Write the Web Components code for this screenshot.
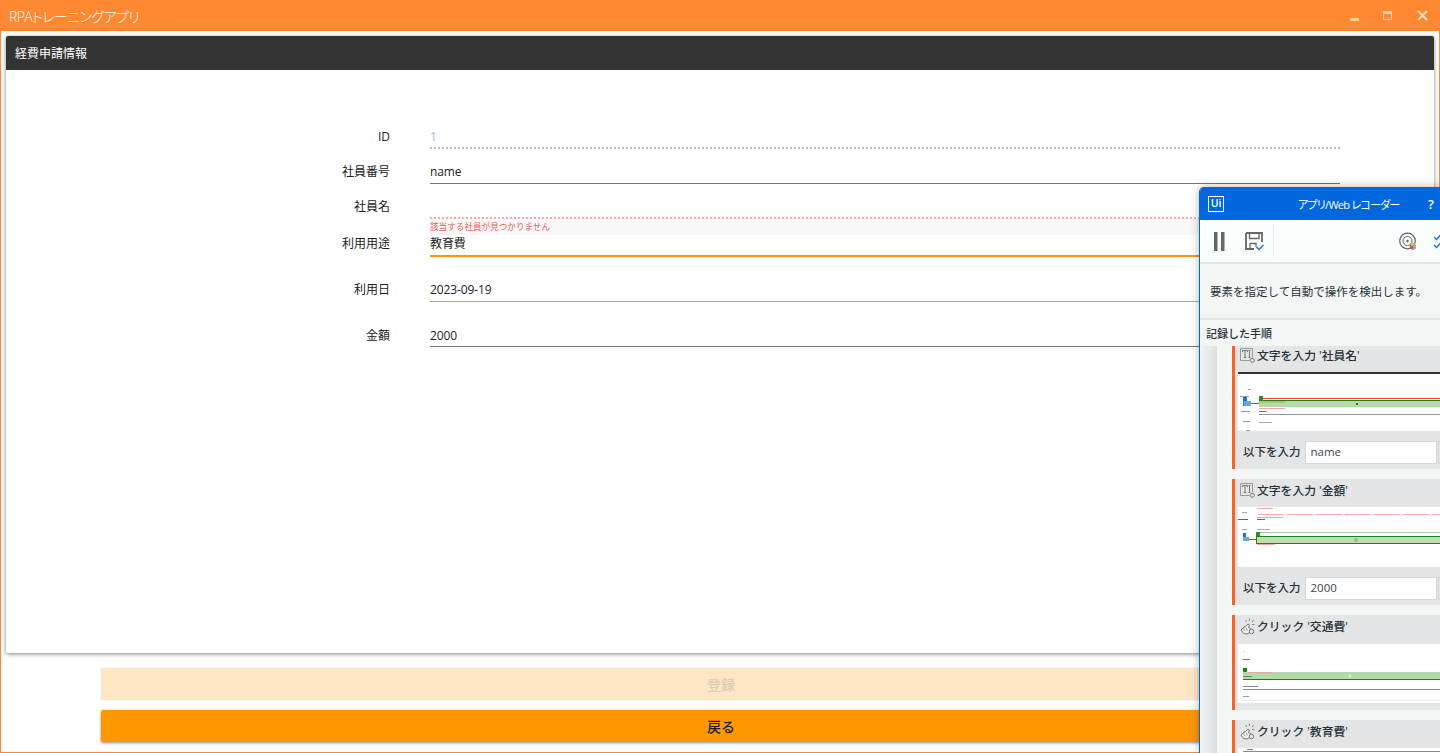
<!DOCTYPE html>
<html lang="ja">
<head>
<meta charset="UTF-8">
<title>RPAトレーニングアプリ</title>
<style>
  html, body { margin: 0; height: 100%; overflow: hidden; background: #fff; }
  body { font-family: "Open Sans", "Noto Sans CJK JP", sans-serif; font-size: 12px; color: #212121; }
</style>
</head>
<body>
<app-window caption="RPAトレーニングアプリ">
  <form-card caption="経費申請情報">
    <form-row label="ID" value="1" kind="readonly" h="30" pad="9"></form-row>
    <form-row label="社員番号" value="name" h="35" pad="14"></form-row>
    <form-row label="社員名" kind="invalid" h="35" pad="14" error="該当する社員が見つかりません"></form-row>
    <form-row label="利用用途" value="教育費" kind="select" h="22" pad="0"></form-row>
    <form-row label="利用日" value="2023-09-19" kind="date" h="45" pad="24"></form-row>
    <form-row label="金額" value="2000" h="45" pad="25"></form-row>
  </form-card>
  <action-button disabled>登録</action-button>
  <action-button>戻る</action-button>
</app-window>

<recorder-window caption="アプリ/Web レコーダー" hint="要素を指定して自動で操作を検出します。" heading="記録した手順">
  <recorder-step icon="type" caption="文字を入力 '社員名'" value="name" thumb="a" cut></recorder-step>
  <recorder-step icon="type" caption="文字を入力 '金額'" value="2000" thumb="b"></recorder-step>
  <recorder-step icon="click" caption="クリック '交通費'" thumb="c"></recorder-step>
  <recorder-step icon="click" caption="クリック '教育費'" thumb="d"></recorder-step>
</recorder-window>

<script>
  class AppWindow extends HTMLElement {
    constructor() {
      super();
      this.attachShadow({ mode: 'open' });
      this.shadowRoot.innerHTML = `
        <style>
          :host {
            display: flex;
            flex-direction: column;
            box-sizing: border-box;
            height: 753px;
            border: 1px solid #ff8833;
            border-top: 0;
          }
          .bar {
            display: flex;
            align-items: center;
            flex: none;
            height: 31px;
            background: #ff8833;
            color: #fff;
            padding-left: 9px;
            margin: 0 -1px;
          }
          .caption {
            flex: 1;
            font-size: 14px;
            font-weight: 300;
            letter-spacing: -.6px;
            font-feature-settings: "palt";
          }
          .ctl { width: 33px; height: 31px; display: flex; align-items: center; justify-content: center; }
          .ctl svg { display: block; }
          .ctl:last-child { margin: 0 1px 0 2px; }
          .body {
            flex: 1;
            display: flex;
            flex-direction: column;
            min-height: 0;
            padding: 5px 5px 0;
          }
        </style>
        <div class="bar">
          <span class="caption"></span>
          <span class="ctl"><svg width="11" height="11" viewBox="0 0 11 11"><rect x="1" y="8" width="9" height="3" fill="#ffcfa6"/></svg></span>
          <span class="ctl"><svg width="11" height="11" viewBox="0 0 11 11" fill="none"><path d="M1.5 1.500h8v8h-8z" stroke="#ffcfa6"/><rect x="1" y="1" width="9" height="3" fill="#ffcfa6"/></svg></span>
          <span class="ctl"><svg width="11" height="11" viewBox="0 0 11 11"><path d="M1 1l9 9M10 1l-9 9" stroke="#ffd9b8" stroke-width="2"/></svg></span>
        </div>
        <div class="body"><slot></slot></div>
      `;
    }
    connectedCallback() {
      this.shadowRoot.querySelector('.caption').textContent = this.getAttribute('caption');
    }
  }
  customElements.define('app-window', AppWindow);

  class FormCard extends HTMLElement {
    constructor() {
      super();
      this.attachShadow({ mode: 'open' });
      this.shadowRoot.innerHTML = `
        <style>
          :host {
            display: block;
            height: 617px;
            flex: none;
            margin-bottom: 15px;
            background: #fff;
            border-radius: 2px;
            box-shadow: 0 1px 4px rgba(0,0,0,.5);
          }
          header {
            height: 34px;
            display: flex;
            align-items: center;
            padding-left: 9px;
            background: #333;
            color: #fff;
            font-size: 12px;
            border-radius: 2px 2px 0 0;
          }
          .rows { padding-top: 49px; }
        </style>
        <header></header>
        <div class="rows"><slot></slot></div>
      `;
    }
    connectedCallback() {
      this.shadowRoot.querySelector('header').textContent = this.getAttribute('caption');
    }
  }
  customElements.define('form-card', FormCard);

  class FormRow extends HTMLElement {
    constructor() {
      super();
      this.attachShadow({ mode: 'open' });
      this.shadowRoot.innerHTML = `
        <style>
          :host { display: grid; grid-template-columns: 384px 910px; column-gap: 40px; }
          .label { text-align: right; padding-top: var(--pad); line-height: 17px; }
          .field { box-sizing: border-box; border-bottom: 1px solid #757575; height: var(--h); }
          .value { padding-top: var(--pad); line-height: 17px; letter-spacing: -.1px; }
          .error {
            height: 16px;
            padding-top: 1px;
            box-sizing: border-box;
            background: #f9f9f9;
            font-size: 8.6px;
            line-height: 15px;
            color: #ef5a5a;
          }
          .error:empty { display: none; }
          :host([kind="readonly"]) .field { border-bottom: 2px dotted #bdbdbd; }
          :host([kind="readonly"]) .value { color: #8fb8dc; }
          :host([kind="invalid"]) .field { border-bottom: 2px dotted #ffa8a0; }
          :host([kind="select"]) .field { border-bottom: 2px solid #ff9800; }
          :host([kind="date"]) .field { border-bottom-color: #e8a04a; }
        </style>
        <div class="label"></div>
        <div>
          <div class="field"><div class="value"></div></div>
          <div class="error"></div>
        </div>
      `;
    }
    connectedCallback() {
      const root = this.shadowRoot;
      root.querySelector('.label').textContent = this.getAttribute('label');
      root.querySelector('.value').textContent = this.getAttribute('value') || '';
      root.querySelector('.error').textContent = this.getAttribute('error') || '';
      this.style.setProperty('--h', this.getAttribute('h') + 'px');
      this.style.setProperty('--pad', this.getAttribute('pad') + 'px');
    }
  }
  customElements.define('form-row', FormRow);

  class ActionButton extends HTMLElement {
    constructor() {
      super();
      this.attachShadow({ mode: 'open' });
      this.shadowRoot.innerHTML = `
        <style>
          :host {
            display: flex;
            align-items: center;
            justify-content: center;
            flex: none;
            height: 32px;
            margin: 0 95px 10px;
            padding-left: 2px;
            background: #ff9800;
            color: #212121;
            border-radius: 2px;
            font-size: 14px;
            font-weight: 500;
            box-shadow: 0 1px 3px rgba(0,0,0,.45);
          }
          :host([disabled]) {
            background: #fee6c4;
            color: #d9cbb5;
            box-shadow: 0 0 2px rgba(0,0,0,.12);
          }
        </style>
        <slot></slot>
      `;
    }
  }
  customElements.define('action-button', ActionButton);

  class RecorderWindow extends HTMLElement {
    constructor() {
      super();
      this.attachShadow({ mode: 'open' });
      this.shadowRoot.innerHTML = `
        <style>
          :host {
            position: absolute;
            left: 1199px; top: 187px;
            width: 270px; height: 566px;
            box-sizing: border-box;
            display: flex;
            flex-direction: column;
            overflow: hidden;
            background: #f4f6f6;
            border-left: 1px solid #0067df;
            border-radius: 5px 0 0 0;
            color: #273139;
            box-shadow: 0 0 8px rgba(0,0,0,.3);
          }
          .head {
            flex: none;
            display: flex;
            align-items: center;
            height: 33px;
            background: #0067df;
            color: #fff;
          }
          .logo {
            box-sizing: border-box;
            width: 16px; height: 16px;
            margin-left: 8px;
            border: 1.5px solid #fff;
            font: 600 10.5px/13px "Open Sans", sans-serif;
            text-align: center;
          }
          .title {
            margin-left: 74px;
            width: 119px;
            font-size: 11px;
            letter-spacing: -.75px;
            white-space: nowrap;
            font-feature-settings: "palt";
          }
          .help { margin-left: 11px; font-size: 13px; font-weight: 600; }
          .tools {
            flex: none;
            display: flex;
            align-items: center;
            height: 42px;
            border-bottom: 2px solid #e3e5e6;
            background: linear-gradient(#fdfefe, #f9fafa);
          }
          .tools svg { display: block; flex: none; }
          .sep { width: 1px; height: 32px; background: #eceeef; margin-left: 9px; }
          .hint {
            flex: none;
            height: 56px;
            display: flex;
            align-items: center;
            padding-left: 10px;
            font-size: 11.5px;
            border-bottom: 2px solid #e3e5e6;
            box-sizing: border-box;
          }
          .heading {
            flex: none;
            height: 26px;
            display: flex;
            align-items: center;
            padding-left: 6px;
            font-size: 11px;
            font-weight: 500;
          }
          .list { flex: 1; display: flex; min-height: 0; }
          .rail {
            flex: none;
            width: 17px;
            background: linear-gradient(90deg, #f4f5f5, #dcdee0);
            margin-right: 15px;
          }
          .steps { flex: 1; min-width: 0; }
        </style>
        <div class="head">
          <div class="logo">Ui</div>
          <div class="title"></div>
          <div class="help">?</div>
        </div>
        <div class="tools">
          <svg style="margin-left:14px" width="11" height="19" viewBox="0 0 11 19"><rect x="0" y="0" width="3.500" height="19" fill="#666"/><rect x="7" y="0" width="3.500" height="19" fill="#666"/></svg>
          <svg style="margin-left:20px" width="19" height="19" viewBox="0 0 19 19" fill="none">
            <path d="M1 1h16v9M1 1v16h8" stroke="#666" stroke-width="1.800"/>
            <path d="M4.500 1v5.500h9.500V1" stroke="#666" stroke-width="1.300"/>
            <path d="M5 17v-5.500h6V15" stroke="#666" stroke-width="1.300"/>
            <path d="M11.500 15l2.500 2.500 4.500-4.500" stroke="#1976d2" stroke-width="1.500"/>
          </svg>
          <div class="sep"></div>
          <svg style="margin-left:125px" width="19" height="19" viewBox="0 0 19 19" fill="none">
            <circle cx="8.500" cy="9" r="7.800" stroke="#666" stroke-width="1.200"/>
            <circle cx="8.500" cy="9" r="4.500" stroke="#666"/>
            <circle cx="8.500" cy="9" r="1.200" fill="#666"/>
            <path d="M11 12l3-1.500 3 1.500-3 1.500z" fill="#f6b73c"/>
            <path d="M11 12.500l3 1.500v4l-3-1.500z" fill="#e5532d"/>
            <path d="M17 12.500l-3 1.500v4l3-1.500z" fill="#6cb7f0"/>
          </svg>
          <svg style="margin-left:16px" width="16" height="16" viewBox="0 0 16 16" fill="none">
            <path d="M0 4l2.500 2.500L7 1.500M0 12l2.500 2.500L7 9.500" stroke="#1976d2" stroke-width="1.500"/>
            <path d="M9 4h7M9 12h7" stroke="#666" stroke-width="1.500"/>
          </svg>
        </div>
        <div class="hint"></div>
        <div class="heading"></div>
        <div class="list">
          <div class="rail"></div>
          <div class="steps"><slot></slot></div>
        </div>
      `;
    }
    connectedCallback() {
      const root = this.shadowRoot;
      root.querySelector('.title').textContent = this.getAttribute('caption');
      root.querySelector('.hint').textContent = this.getAttribute('hint');
      root.querySelector('.heading').textContent = this.getAttribute('heading');
    }
  }
  customElements.define('recorder-window', RecorderWindow);

  // tiny previews of the recorded screen, coordinates read off the reference
  const thumbs = {
    a: `<svg width="208" height="59" viewBox="0 0 208 59">
          <rect y="0" width="208" height="2" fill="#333"/>
          <path d="M10 17.500h3M2 24.500h9M3 39.500h9M5 49.500h7M8 58.500h4" stroke="#999"/>
          <rect x="5" y="25" width="4" height="9" fill="#1976d2"/>
          <rect x="6" y="29" width="7" height="5" fill="#6aa5e6"/>
          <path d="M13 31.500h8" stroke="#1976d2"/>
          <rect x="25" y="26" width="183" height="1" fill="#f44336"/>
          <rect x="21" y="29" width="187" height="6" fill="#b5d8ad"/>
          <rect x="21" y="28" width="187" height="1" fill="#128a12"/>
          <rect x="21" y="24" width="4" height="5" fill="#2e8b2e"/>
          <rect x="118" y="31" width="2" height="2" fill="#128a12"/>
          <path d="M21 30h26" stroke="#9b9a58" stroke-width=".8"/>
          <path d="M21 36.500h26" stroke="#f4a6a0"/>
          <path d="M21 39.500h8" stroke="#777"/>
          <rect x="21" y="42" width="187" height="1" fill="#999"/>
          <path d="M21 50.500h13" stroke="#aab"/>
        </svg>`,
    b: `<svg width="208" height="60" viewBox="0 0 208 60">
          <path d="M19 1.500h16M19 10.500h26" stroke="#f4a6a0"/>
          <path d="M4 5.500h5M4 22.500h5M19 22.500h13" stroke="#aaa"/>
          <path d="M0 12.500h10M19 12.500h8" stroke="#666"/>
          <path d="M20 7.500h188" stroke="#ffb0a8" stroke-dasharray="26 3"/>
          <rect x="19" y="25" width="189" height="1" fill="#bbb"/>
          <rect x="5" y="26" width="3" height="8" fill="#1976d2"/>
          <rect x="5" y="30" width="6" height="4" fill="#6aa5e6"/>
          <path d="M11 32.500h7" stroke="#1976d2"/>
          <rect x="18.500" y="29.500" width="195" height="7" fill="#c1dcb4" stroke="#128a12"/>
          <rect x="18" y="25" width="4" height="4" fill="#2e8b2e"/>
          <rect x="117" y="32" width="2" height="2" fill="#eaf5e6" stroke="#128a12" stroke-width=".5"/>
          <path d="M19 37.500h18" stroke="#f4a6a0"/>
        </svg>`,
    c: `<svg width="208" height="60" viewBox="0 0 208 60">
          <rect width="208" height="1" fill="#e3e5e7"/>
          <path d="M5 8.500h2" stroke="#bfe0f5"/>
          <path d="M5 16.500h7" stroke="#777"/>
          <rect x="5" y="25" width="4" height="4" fill="#128a12"/>
          <rect x="5" y="29" width="203" height="7" fill="#b5d8ad"/>
          <path d="M10 29.500h24" stroke="#e7a6a0"/>
          <path d="M5 33.500h9" stroke="#777"/>
          <rect x="111" y="32" width="2" height="2" fill="#e8f3e4"/>
          <rect x="5" y="36" width="203" height="1" fill="#128a12"/>
          <path d="M5 43.500h15" stroke="#889"/>
          <rect x="5" y="46" width="203" height="1" fill="#888"/>
          <path d="M5 53.500h6" stroke="#999"/>
          <rect x="5" y="57" width="203" height="1" fill="#fde9cf"/>
        </svg>`,
    d: `<svg width="208" height="60" viewBox="0 0 208 60">
          <path d="M9 1.500h6" stroke="#777"/>
          <rect x="5" y="3" width="203" height="1" fill="#888"/>
        </svg>`
  };

  const stepIcons = {
    type: `<svg width="15" height="15" viewBox="0 0 15 15" fill="none">
        <path d="M9.500 12.500h-9v-12h12v9" stroke="#9a9a9a"/>
        <path d="M2.500 4V2.500h5V4M5 2.500V9M3.800 9.500h2.400" stroke="#777"/>
        <path d="M9.500 3v6.500M8.500 2.500h2M8.500 9.500h2" stroke="#777"/>
        <circle cx="12.300" cy="12.300" r="2" fill="#e3e5e7" stroke="#777"/>
      </svg>`,
    click: `<svg width="15" height="17" viewBox="0 0 15 17" fill="none">
        <path d="M9.500 .5v2.500M5.500 2l1.300 2M13.500 2l-1.300 2M14.500 6.500H12" stroke="#8a8a8a"/>
        <path d="M1 12l3-3 1.500-.5L8 6l1.500 1-1 2.500 2 1-1 4-2.500 1.500-3.500-.5z" fill="#f2f2f2" stroke="#777"/>
        <path d="M3.500 10l1.500 3M6 9.500l1.500 3" stroke="#999"/>
        <circle cx="11.500" cy="13.500" r="2.300" fill="#e3e5e7" stroke="#777"/>
      </svg>`
  };

  class RecorderStep extends HTMLElement {
    constructor() {
      super();
      this.attachShadow({ mode: 'open' });
      this.shadowRoot.innerHTML = `
        <style>
          :host {
            display: block;
            box-sizing: border-box;
            margin-bottom: 10px;
            background: #e3e5e7;
            border-left: 3px solid #fa6229;
          }
          .top {
            box-sizing: border-box;
            display: flex;
            align-items: center;
            gap: 2px;
            height: 28px;
            padding: 0 0 6px 5px;
            font-size: 11.8px;
            font-weight: 500;
            white-space: nowrap;
          }
          .caption { margin-top: -2px; }
          :host([cut]) .top { height: 26px; padding-bottom: 8px; }
          .icon { flex: none; width: 15px; }
          .icon svg { display: block; }
          .thumb { margin-left: 3px; background: #fff; overflow: hidden; }
          .thumb svg { display: block; }
          .entry {
            box-sizing: border-box;
            display: flex;
            align-items: center;
            height: 38px;
            padding: 4px 0 0 8px;
            gap: 4px;
            font-size: 11.5px;
            font-weight: 500;
          }
          .entry span { margin-bottom: 2px; }
          .entry b {
            box-sizing: border-box;
            width: 132px;
            height: 23px;
            padding-left: 5px;
            background: #fff;
            border: 1px solid #d5d7d9;
            font-weight: 400;
            line-height: 19px;
            color: #3b444c;
          }
          .entry i {
            width: 20px;
            height: 23px;
            margin-left: -3px;
            box-sizing: border-box;
            border: 1px solid #d5d7d9;
          }
          .pad { height: 7px; }
        </style>
        <div class="top"><span class="icon"></span><span class="caption"></span></div>
        <div class="thumb"></div>
        <div class="entry"><span>以下を入力</span><b></b><i></i></div>
        <div class="pad"></div>
      `;
    }
    connectedCallback() {
      const root = this.shadowRoot;
      root.querySelector('.icon').innerHTML = stepIcons[this.getAttribute('icon')];
      root.querySelector('.caption').textContent = this.getAttribute('caption');
      root.querySelector('.thumb').innerHTML = thumbs[this.getAttribute('thumb')];
      const value = this.getAttribute('value');
      if (value) {
        root.querySelector('.entry b').textContent = value;
        root.querySelector('.pad').remove();
      } else {
        root.querySelector('.entry').remove();
      }
    }
  }
  customElements.define('recorder-step', RecorderStep);
</script>
</body>
</html>
